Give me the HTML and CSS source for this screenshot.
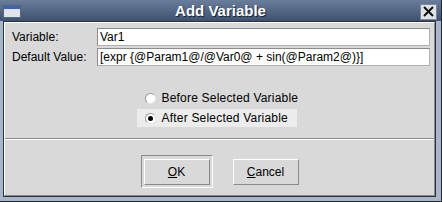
FILE: index.html
```html
<!DOCTYPE html>
<html lang="en">
<head>
    <meta charset="UTF-8">
    <title>Add Variable</title>
    <link rel="stylesheet" href="styles.css">
</head>
<body>

<div class="window">
    <!--Title bar of the dialog-->
    <div class="titlebar">
        <svg class="winicon" width="18" height="13" viewBox="0 0 18 13">
            <rect x="0.5" y="0.5" width="17" height="12" fill="#e4e8ee" stroke="#5a6478"/>
            <rect x="1" y="1" width="16" height="3" fill="#3f64b4"/>
            <rect x="1" y="4" width="16" height="8" fill="#dfe3ea"/>
        </svg>
        <span class="title">Add Variable</span>
        <div class="closebtn">
            <svg width="17" height="16" viewBox="0 0 17 16">
                <rect x="0.5" y="0.5" width="16" height="15" fill="#dfe2e6" stroke="#7d8796"/>
                <path d="M4 3 L13 12 M13 3 L4 12" stroke="#111" stroke-width="2"/>
            </svg>
        </div>
    </div>

    <div class="frame">
        <div class="panel">
            <div class="fields">
                <div class="row">
                    <label class="lbl">Variable:</label>
                    <input class="entry" type="text" value="Var1">
                </div>
                <div class="row">
                    <label class="lbl">Default Value:</label>
                    <input class="entry" type="text" value="[expr {@Param1@/@Var0@ + sin(@Param2@)}]">
                </div>
            </div>

            <div class="radios">
                <div class="radiogroup">
                    <div class="radio">
                        <span class="dot"></span>Before Selected Variable
                    </div>
                    <div class="radio active">
                        <span class="dot on"></span>After Selected Variable
                    </div>
                </div>
            </div>

            <div class="separator"></div>

            <div class="buttons">
                <div class="focusring">
                    <div class="btn"><u>O</u>K</div>
                </div>
                <div class="btn"><u>C</u>ancel</div>
            </div>
        </div>
    </div>
</div>

</body>
</html>
```

FILE: styles.css
```css
/*whole page*/
body {
    margin: 0;
    font-family: "Liberation Sans", Arial, sans-serif;
    font-size: 12px;
    color: #000;
}

/*outer window frame*/
.window {
    width: 442px;
    height: 202px;
    box-sizing: border-box;
    background-color: #a8b6c8;
    border-right: 1px solid #1f2838;
    border-bottom: 1px solid #1f2838;
    display: flex;
    flex-direction: column;
}

.titlebar {
    height: 21px;
    flex: none;
    display: flex;
    align-items: center;
    position: relative;
    background: linear-gradient(#6a7e9b, #3d5170);
}

.winicon {
    margin-left: 3px;
    margin-top: 1px;
}

.title {
    position: absolute;
    left: 0;
    right: 0;
    top: 2px;
    text-align: center;
    font-weight: bold;
    font-size: 15px;
    color: #fff;
    text-shadow: 1px 1px 0 #1c2433;
}

.closebtn {
    margin-left: auto;
    margin-right: 4px;
    margin-top: 2px;
    height: 16px;
}

.frame {
    flex: 1;
    margin: 0 5px 4px 3px;
    border: 1px solid #273142;
    display: flex;
}

/*grey dialog body*/
.panel {
    flex: 1;
    background-color: #d9d9d9;
    border-top: 1px solid #fff;
    border-left: 1px solid #fff;
    border-right: 1px solid #8a8a8a;
    border-bottom: 1px solid #8a8a8a;
    display: flex;
    flex-direction: column;
}

.fields {
    padding: 5px 4px 0 7px;
    display: flex;
    flex-direction: column;
    gap: 2px;
}

.row {
    display: flex;
    align-items: center;
}

.lbl {
    width: 85px;
}

.entry {
    flex: 1;
    height: 18px;
    box-sizing: border-box;
    margin: 0;
    padding: 0 2px;
    font-family: inherit;
    font-size: 12px;
    color: #000;
    background-color: #fff;
    border: 1px solid #b0b0b0;
    border-top-color: #8c8c8c;
    border-left-color: #8c8c8c;
    outline: none;
}

.radios {
    display: flex;
    justify-content: center;
    padding: 23px 0 0 0;
    height: 49px;
}

.radiogroup {
    width: 160px;
    margin-right: 6px;
}

.radio {
    height: 18px;
    display: flex;
    align-items: center;
    margin-bottom: 2px;
    white-space: nowrap;
    letter-spacing: 0.2px;
}

.radio.active {
    background-color: #ececec;
}

.dot {
    flex: none;
    width: 9px;
    height: 9px;
    margin: 0 6px 0 8px;
    border-radius: 50%;
    background-color: #fff;
    border: 1px solid #9a9a9a;
    border-right-color: #e6e6e6;
    border-bottom-color: #e6e6e6;
    position: relative;
}

.dot.on::after {
    content: "";
    position: absolute;
    left: 2px;
    top: 2px;
    width: 5px;
    height: 5px;
    border-radius: 50%;
    background-color: #000;
}

.separator {
    border-top: 1px solid #8a8a8a;
    border-bottom: 1px solid #fff;
}

.buttons {
    display: flex;
    justify-content: center;
    align-items: center;
    gap: 20px;
    padding-top: 15px;
}

.focusring {
    padding: 3px 2px 2px 2px;
    border: 1px solid #fff;
    border-top-color: #8a8a8a;
    border-left-color: #8a8a8a;
}

.btn {
    width: 64px;
    height: 24px;
    display: flex;
    align-items: center;
    justify-content: center;
    border: 1px solid #8a8a8a;
    border-top-color: #fff;
    border-left-color: #fff;
}
```
